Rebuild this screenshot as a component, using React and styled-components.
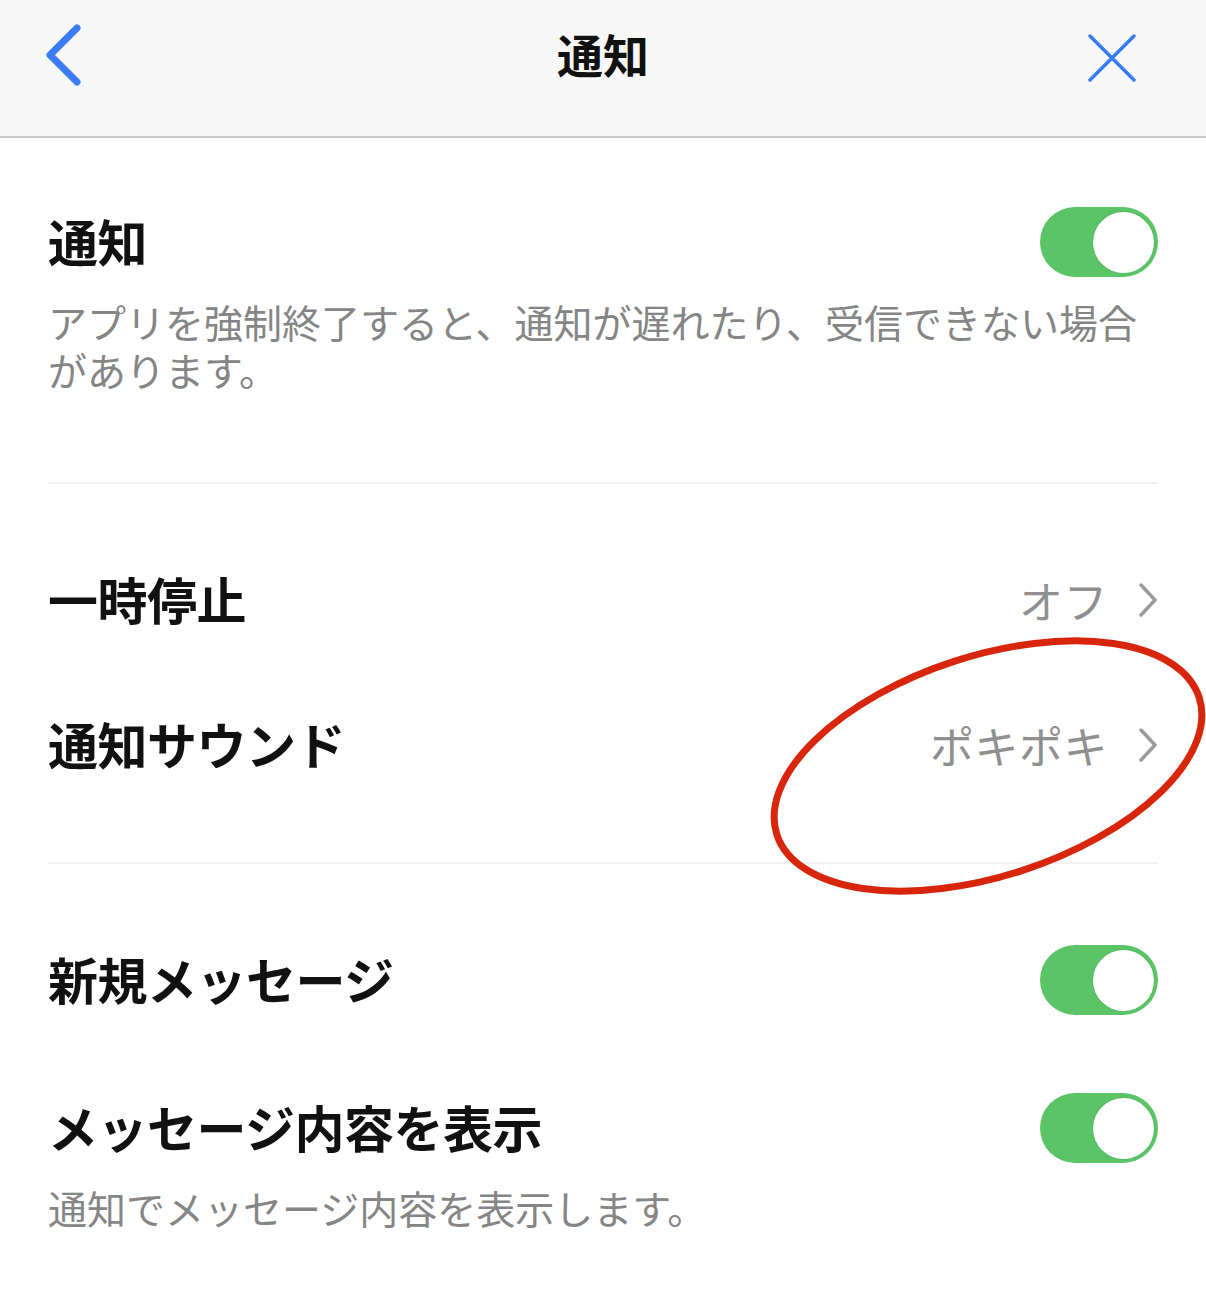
import React from "react";
import styled, { createGlobalStyle } from "styled-components";

const GlobalStyle = createGlobalStyle`
  html, body {
    margin: 0;
    padding: 0;
    background: #ffffff;
  }
  body {
    font-family: "Noto Sans CJK JP", "Noto Sans", sans-serif;
  }
`;

const Page = styled.div`
  position: relative;
  width: 1206px;
  min-height: 1293px;
  overflow: hidden;
  background: #ffffff;
`;

const NavBar = styled.header`
  height: 136px;
  display: grid;
  grid-template-columns: 120px 1fr 120px;
  align-items: center;
  background: #f7f7f8;
  border-bottom: 2px solid #c9c9cb;
`;

const NavButton = styled.button`
  height: 80px;
  display: flex;
  align-items: center;
  justify-content: flex-start;
  padding: ${(p) => (p.$end ? "0 0 0 2px" : "0 0 0 44px")};
  margin-top: ${(p) => (p.$end ? "-20px" : "-26px")};
  background: none;
  border: 0;
`;

const NavTitle = styled.h1`
  margin: -30px 0 0;
  text-align: center;
  font-size: 46px;
  font-weight: 700;
  color: #111111;
`;

const Section = styled.section`
  margin: 0 48px;
  padding: ${(p) => p.$pad || "81px 0 82px"};
  display: flex;
  flex-direction: column;
  gap: ${(p) => p.$gap || "75px"};
  border-bottom: ${(p) => (p.$last ? "none" : "2px solid #f1f1f2")};
`;

const Item = styled.div`
  display: flex;
  flex-direction: column;
  gap: 20px;
`;

const Row = styled.div`
  height: 70px;
  display: flex;
  align-items: center;
  justify-content: space-between;
`;

const Label = styled.span`
  font-size: 50px;
  font-weight: 700;
  color: #111111;
  letter-spacing: -0.5px;
  margin-top: -4px;
`;

const Note = styled.p`
  margin: 0;
  font-size: 39px;
  line-height: 48px;
  color: #858585;
`;

const Value = styled.span`
  display: flex;
  align-items: center;
  gap: 30px;
  font-size: 44px;
  color: #8f8f8f;
  letter-spacing: 0.5px;
`;

const Toggle = styled.span`
  width: 118px;
  height: 70px;
  border-radius: 35px;
  background: #5ac466;
  display: flex;
  align-items: center;
  justify-content: flex-end;
  padding: 0 4px;
  box-sizing: border-box;
`;

const Knob = styled.span`
  width: 61px;
  height: 61px;
  border-radius: 50%;
  background: #ffffff;
  box-shadow: 0 0 0 1px rgba(0, 0, 0, 0.05);
`;

const Circle = styled.svg`
  position: absolute;
  left: 0;
  top: 0;
  pointer-events: none;
`;

const Chevron = () => (
  <svg width="20" height="34" viewBox="0 0 20 34">
    <path d="M3 2 L17 17 L3 32" fill="none" stroke="#9b9b9b" strokeWidth="3.5" strokeLinecap="round" strokeLinejoin="round" />
  </svg>
);

const Switch = () => (
  <Toggle>
    <Knob />
  </Toggle>
);

export default function App() {
  return (
    <Page>
      <GlobalStyle />
      <NavBar>
        <NavButton aria-label="戻る">
          <svg width="40" height="62" viewBox="0 0 40 62">
            <path d="M33 4 L6 31 L33 58" fill="none" stroke="#3a7cf4" strokeWidth="7" strokeLinecap="round" strokeLinejoin="round" />
          </svg>
        </NavButton>
        <NavTitle>通知</NavTitle>
        <NavButton $end aria-label="閉じる">
          <svg width="48" height="48" viewBox="0 0 48 48">
            <path d="M2 2 L46 46 M46 2 L2 46" fill="none" stroke="#3a7cf4" strokeWidth="3.5" strokeLinecap="round" />
          </svg>
        </NavButton>
      </NavBar>

      <Section $pad="69px 0 89px">
        <Item>
          <Row>
            <Label>通知</Label>
            <Switch />
          </Row>
          <Note>アプリを強制終了すると、通知が遅れたり、受信できない場合があります。</Note>
        </Item>
      </Section>

      <Section>
        <Row>
          <Label>一時停止</Label>
          <Value>
            オフ
            <Chevron />
          </Value>
        </Row>
        <Row>
          <Label>通知サウンド</Label>
          <Value>
            ポキポキ
            <Chevron />
          </Value>
        </Row>
      </Section>

      <Section $last $gap="78px">
        <Row>
          <Label>新規メッセージ</Label>
          <Switch />
        </Row>
        <Item>
          <Row>
            <Label>メッセージ内容を表示</Label>
            <Switch />
          </Row>
          <Note>通知でメッセージ内容を表示します。</Note>
        </Item>
      </Section>

      <Circle width="1206" height="1293" viewBox="0 0 1206 1293">
        <ellipse cx="988" cy="766" rx="222" ry="110" transform="rotate(-18 988 766)" fill="none" stroke="#d8260c" strokeWidth="7" />
      </Circle>
    </Page>
  );
}
